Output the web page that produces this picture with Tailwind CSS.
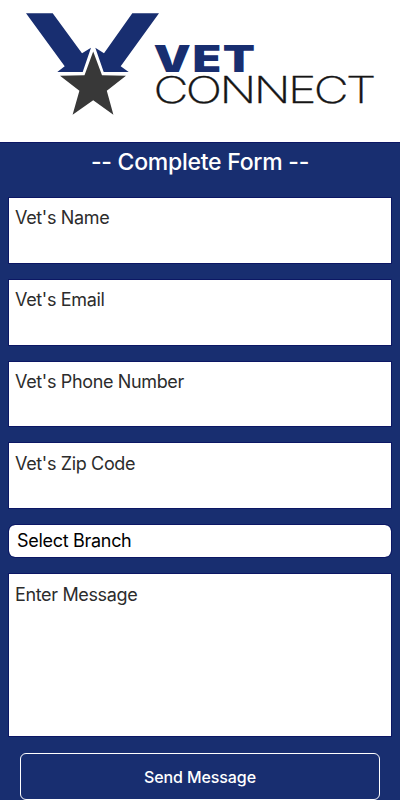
<!DOCTYPE html>
<html lang="en">
  <head>
    <meta charset="UTF-8" />
    <meta name="viewport" content="width=device-width, initial-scale=1.0" />
    <title>Vet Connect</title>
    <script src="https://cdn.jsdelivr.net/npm/@tailwindcss/browser@4"></script>
  </head>
  <body class="h-screen overflow-hidden bg-[#182e70] font-['Inter',sans-serif]">
    <header class="h-[143px] border-b border-[#0c1764] bg-white">
      <svg class="block h-[141px] w-full" viewBox="0 0 400 141" role="img" aria-label="Vet Connect">
        <g fill="#182e70">
          <path d="M26 13.2H52.7L82 53.3L91 47.7L82.7 72H57.3L64.7 66.3Z" />
          <path d="M159 13.2H132.3L104 53.3L95.3 47.7L103.7 72H128.7L120.7 66.3Z" />
        </g>
        <path
          fill="#383838"
          d="M93.2 51.5L102 75.2L126 75.8L106.8 90.7L113.4 114.7L93.2 100.3L72.6 114.7L79.4 90.7L60 75.8L84.5 75.2Z"
        />
        <text x="153.5" y="71.7" textLength="103" lengthAdjust="spacingAndGlyphs" class="fill-[#182e70] text-[36.5px] leading-none font-black tracking-[1.2px]">VET</text>
        <text x="153.5" y="102.6" textLength="220" lengthAdjust="spacingAndGlyphs" class="fill-[#151515] stroke-[#151515] stroke-[0.35px] text-[36.6px] leading-none font-extralight tracking-[-2px]">CONNECT</text>
      </svg>
    </header>

    <main>
      <h1 class="h-[55px] pt-0.5 text-center text-[23px] leading-[34px] font-[550] tracking-[-0.25px] text-white">-- Complete Form --</h1>

      <form class="flex flex-col px-[9px]">
        <textarea class="mb-[17px] block h-[65px] w-full resize-none bg-white px-1.5 pt-2 text-lg leading-6 tracking-[-0.35px] outline outline-[#0c1764] placeholder:text-[#2c2c2c]" placeholder="Vet's Name"></textarea>
        <textarea class="mb-[17px] block h-[65px] w-full resize-none bg-white px-1.5 pt-2 text-lg leading-6 tracking-[-0.35px] outline outline-[#0c1764] placeholder:text-[#2c2c2c]" placeholder="Vet's Email"></textarea>
        <textarea class="mb-[17px] block h-[64px] w-full resize-none bg-white px-1.5 pt-2 text-lg leading-6 tracking-[-0.35px] outline outline-[#0c1764] placeholder:text-[#2c2c2c]" placeholder="Vet's Phone Number"></textarea>
        <textarea class="mb-[17px] block h-[65px] w-full resize-none bg-white px-1.5 pt-[9px] text-lg leading-6 tracking-[-0.35px] outline outline-[#0c1764] placeholder:text-[#2c2c2c]" placeholder="Vet's Zip Code"></textarea>
        <select class="mb-[17px] block h-[32px] w-full appearance-none rounded-md bg-white px-2 text-lg leading-6 tracking-[-0.3px] text-black outline outline-[#0c1764]">
          <option>Select Branch</option>
        </select>
        <textarea class="mb-[17px] block h-[162px] w-full resize-none bg-white px-1.5 pt-[9px] text-lg leading-6 tracking-[-0.35px] outline outline-[#0c1764] placeholder:text-[#2c2c2c]" placeholder="Enter Message"></textarea>
        <button type="submit" class="mx-[11px] h-[47px] rounded-md border border-white text-base font-medium tracking-[-0.1px] text-white">Send Message</button>
      </form>
    </main>
  </body>
</html>
